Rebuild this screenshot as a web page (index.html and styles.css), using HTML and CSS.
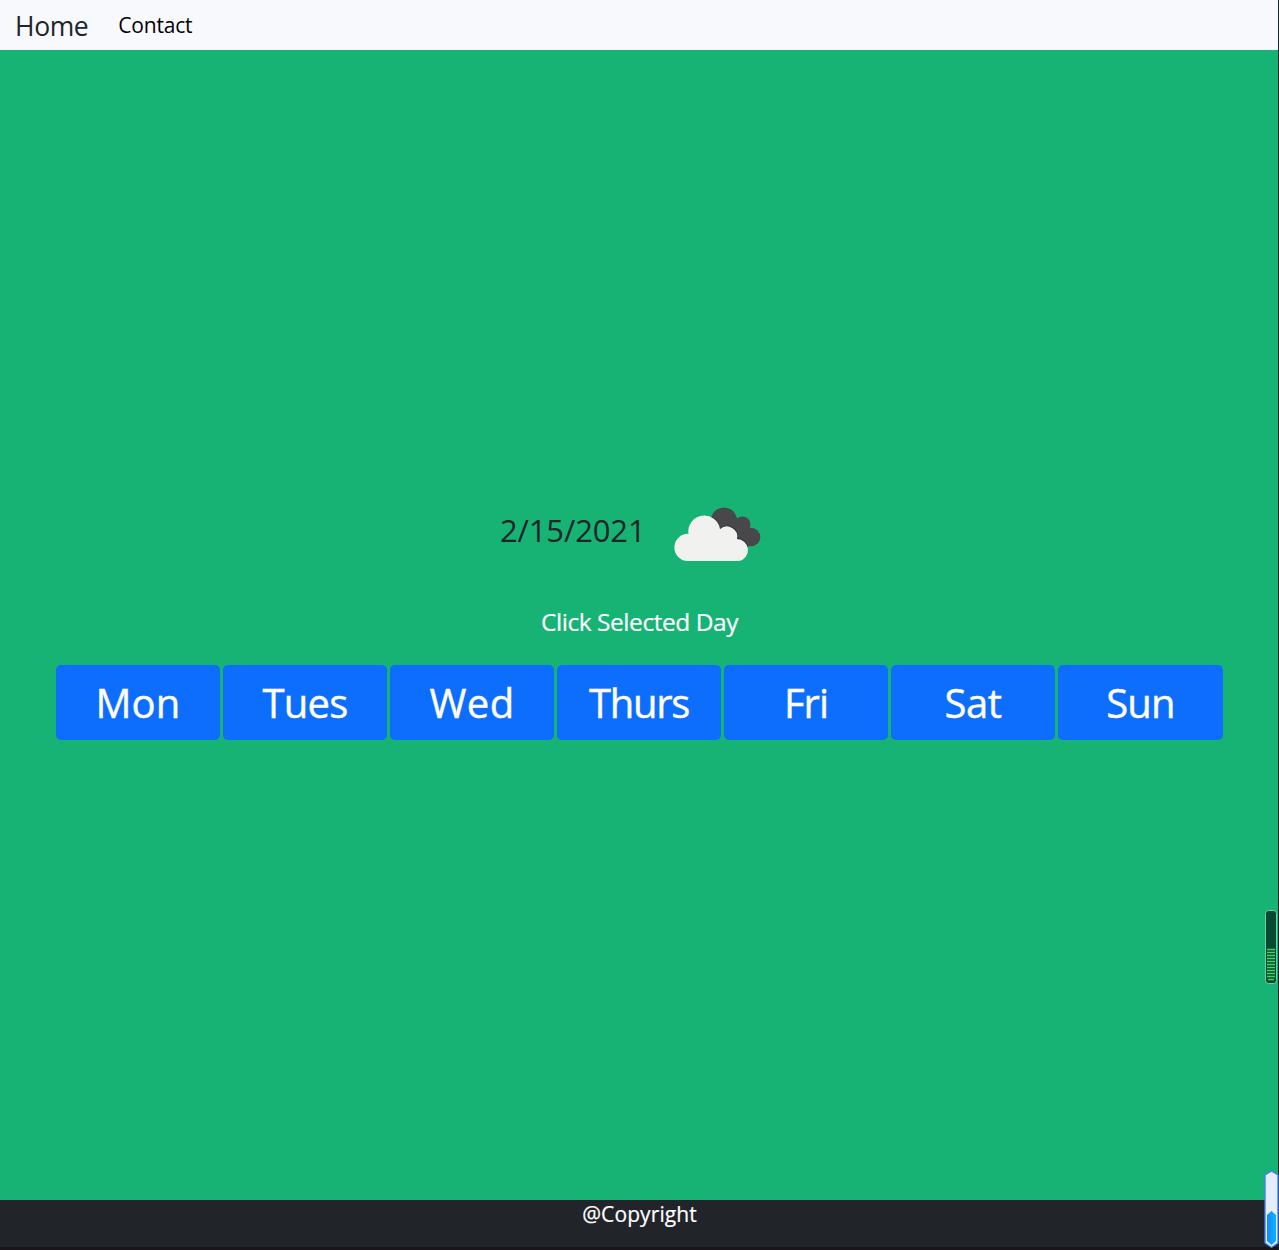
FILE: index.html
```html
<!DOCTYPE html>
<html lang="en">
<head>
<meta charset="utf-8">
<title>Weather</title>
<link rel="stylesheet" href="styles.css">
</head>
<body>
<nav class="navbar">
  <a class="brand">Home</a>
  <a class="nav-link">Contact</a>
</nav>
<main class="main">
  <div class="today">
    <span class="date">2/15/2021</span>
    <svg class="cloud" width="90" height="58" viewBox="0 0 90 58">
      <g fill="#48484a">
        <circle cx="51" cy="15.500" r="13"/>
        <circle cx="69.500" cy="19.500" r="8"/>
        <circle cx="78" cy="32" r="9.300"/>
        <path d="M41 12 63 12 75 22 81 40 66 41 48 30Z"/>
      </g>
      <clipPath id="edge"><path d="M40 12H63L80 42H66Z"/></clipPath>
      <path d="M14.500 56a13.600 13.600 0 0 1 1-27.200A15.600 15.600 0 0 1 47 24.200A10.300 10.300 0 0 1 64 34A11.100 11.100 0 0 1 66 56Z" fill="none" stroke="#252b2a" stroke-opacity=".65" stroke-width="2" clip-path="url(#edge)"/>
      <path d="M14.500 56a13.600 13.600 0 0 1 1-27.200A15.600 15.600 0 0 1 47 24.200A10.300 10.300 0 0 1 64 34A11.100 11.100 0 0 1 66 56Z" fill="#f1f2f0"/>
    </svg>
  </div>
  <p class="prompt">Click Selected Day</p>
  <div class="days">
    <button class="day mon">Mon</button>
    <button class="day tues">Tues</button>
    <button class="day wed">Wed</button>
    <button class="day thurs">Thurs</button>
    <button class="day fri">Fri</button>
    <button class="day sat">Sat</button>
    <button class="day sun">Sun</button>
  </div>
</main>
<footer class="footer">@Copyright</footer>
<div class="window-edge"></div>
<svg class="meter" width="14" height="76" viewBox="0 0 14 76">
  <rect x="1.500" y="1.500" width="11" height="73" rx="3" fill="#084a31" stroke="#70cfa5"/>
  <path d="M3 40.500h8M3 43.500h8M3 46.500h8M3 49.500h8M3 52.500h8M3 55.500h8M3 58.500h8M3 61.500h8M3 64.500h8M3 67.500h8M4 70.500h6" stroke="#43d45f" stroke-width="1.700"/>
</svg>
<svg class="gauge" width="15" height="79" viewBox="0 0 15 79">
  <path d="M1 5 7.500 1 14 5V73L7.500 77.500 1 73Z" fill="#e4ecfd" stroke="#3f7cf5" stroke-width="1.300"/>
  <path d="M3 45 7.500 41 12 45V71L7.500 75 3 71Z" fill="url(#blue)"/>
  <defs><linearGradient id="blue"><stop stop-color="#1687fb"/><stop offset="1" stop-color="#08b5ff"/></linearGradient></defs>
</svg>
</body>
</html>
```
FILE: styles.css
```css
* { box-sizing: border-box; }
body {
  margin: 0;
  height: 1250px;
  display: flex;
  flex-direction: column;
  overflow: hidden;
  position: relative;
  background: #17b374;
  font-family: "Open Sans", "Noto Sans", sans-serif;
  color: #212529;
}
.navbar {
  height: 50px;
  flex: none;
  display: flex;
  align-items: center;
  gap: 30px;
  padding: 1px 0 0 15px;
  background: #f8f9fc;
}
.brand { font-size: 26.500px; letter-spacing: -.4px; }
.nav-link { font-size: 21px; color: #000; letter-spacing: -.2px; padding-bottom: 1px; }
.main { flex: 1; display: flex; flex-direction: column; }
.today {
  height: 58px;
  margin-top: 455px;
  padding-left: 500px;
  display: flex;
  align-items: center;
}
.date { width: 173px; font-size: 31px; letter-spacing: -.15px; line-height: 40px; padding-bottom: 9px; }
.prompt {
  margin: 42px 0 0;
  height: 34px;
  line-height: 34px;
  text-align: center;
  font-size: 24.500px;
  letter-spacing: -.45px;
  color: #fff;
  -webkit-text-stroke: .2px #fff;
}
.days {
  display: grid;
  grid-template-columns: repeat(6, 164px) 165px;
  gap: 3px;
  margin-top: 26px;
  padding: 0 56px;
}
.day {
  height: 75px;
  border: 0;
  border-radius: 5px;
  padding: 0;
  background: #0d6efd;
  color: #fff;
  font: 40px/75px "Open Sans", "Noto Sans", sans-serif;
  -webkit-text-stroke: .4px #fff;
}
.mon { letter-spacing: .2px; }
.tues { letter-spacing: -.8px; }
.wed { letter-spacing: .4px; }
.thurs { letter-spacing: -1.300px; }
.fri { letter-spacing: -1px; }
.sat { letter-spacing: -.5px; }
.sun { letter-spacing: -.8px; }
.footer {
  height: 50px;
  flex: none;
  border-bottom: 3px solid #191519;
  background: #212529;
  color: #fff;
  font-size: 21px;
  letter-spacing: .1px;
  line-height: 29px;
  text-align: center;
  -webkit-text-stroke: .2px #fff;
}
.window-edge { position: absolute; top: 0; right: 0; width: 1px; height: 100%; background: #17242b; }
.meter { position: absolute; left: 1264px; top: 909px; }
.gauge { position: absolute; left: 1264px; top: 1170px; }
```
